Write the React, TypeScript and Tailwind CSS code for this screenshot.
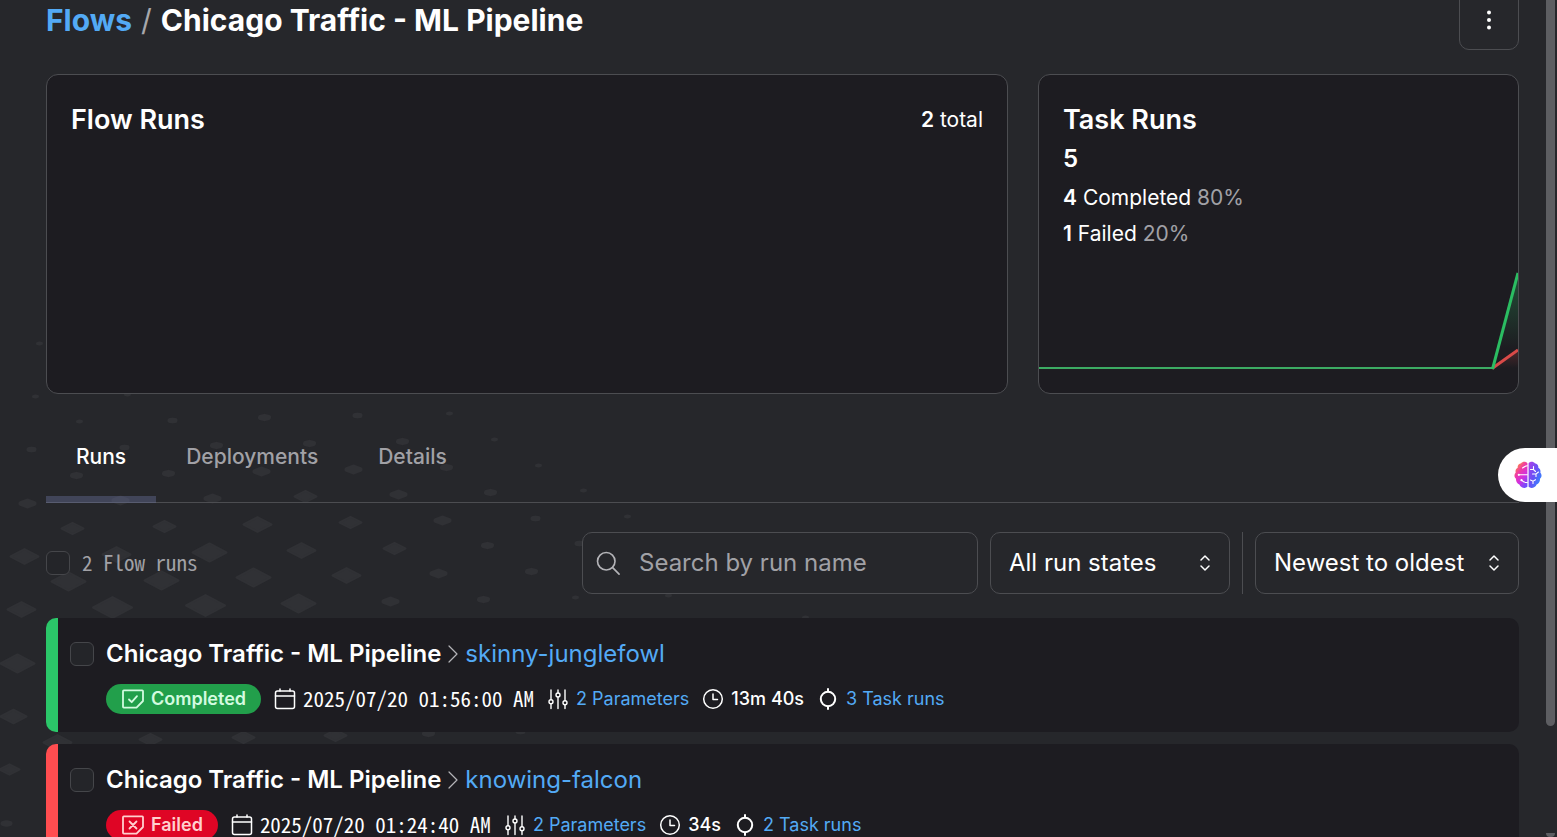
import type { ReactNode } from 'react';

/* x, y and width of each tile in the isometric backdrop */
const TILES: [number, number, number][] = [
  [39, 343, 7], [35, 396, 7], [127, 394, 7], [79, 421, 7], [172, 420, 10], [264, 417, 13], [357, 415, 10], [449, 413, 7],
  [494, 439, 7], [538, 465, 7], [583, 490, 7], [402, 441, 13], [446, 467, 13], [490, 492, 13], [216, 445, 13],
  [309, 443, 13], [124, 447, 10], [31, 449, 10], [76, 475, 13], [168, 473, 13], [261, 471, 18], [353, 469, 18],
  [398, 494, 18], [305, 496, 24], [212, 498, 18], [120, 500, 18], [27, 503, 18],
  [72, 528, 24], [164, 526, 24], [257, 524, 30], [350, 522, 24], [442, 520, 18], [535, 518, 10], [627, 516, 7],
  [24, 556, 30], [116, 554, 30], [209, 552, 36], [301, 550, 30], [394, 548, 24], [487, 545, 13], [579, 543, 10],
  [68, 581, 36], [161, 580, 36], [253, 577, 36], [346, 575, 30], [438, 573, 18], [531, 571, 13],
  [21, 609, 30], [112, 607, 41], [205, 605, 41], [298, 603, 36], [390, 601, 18], [483, 599, 13], [575, 597, 7], [668, 595, 7],
  [805, 617, 7], [17, 663, 36], [13, 716, 28], [9, 769, 22], [6, 823, 12],
  [57, 742, 30], [150, 739, 24], [243, 737, 24], [335, 735, 24], [428, 733, 13], [520, 731, 10],
];

function Backdrop() {
  return (
    <svg className="absolute left-0 top-0" width="900" height="837" aria-hidden="true">
      <g fill="#303135" stroke="#303135" strokeLinejoin="round">
        {TILES.map(([x, y, w]) => {
          const r = w > 20 ? 2 : w > 9 ? 5 : 3;
          const hx = (w - r) / 2;
          const hy = Math.max(0.4, (w * 0.56 - r) / 2);
          return (
            <polygon
              key={`${x}-${y}`}
              strokeWidth={r}
              points={`${x - hx},${y} ${x},${y - hy} ${x + hx},${y} ${x},${y + hy}`}
              transform="translate(0.5 0.5)"
            />
          );
        })}
      </g>
    </svg>
  );
}

function Icon({ children, className, stroke = 1.5 }: { children: ReactNode; className: string; stroke?: number }) {
  return (
    <svg
      viewBox="0 0 24 24"
      fill="none"
      stroke="currentColor"
      strokeWidth={stroke}
      strokeLinecap="round"
      strokeLinejoin="round"
      className={`shrink-0 ${className}`}
      aria-hidden="true"
    >
      {children}
    </svg>
  );
}

function UpDown() {
  return (
    <Icon className="pointer-events-none absolute right-[13px] top-1/2 size-6 -translate-y-1/2">
      <path d="M8 9l4-4 4 4M8 15l4 4 4-4" />
    </Icon>
  );
}

function Checkbox({ label }: { label: string }) {
  return (
    <input
      type="checkbox"
      aria-label={label}
      className="size-6 shrink-0 appearance-none rounded-md border border-[#45464a] bg-[#242529]"
    />
  );
}

function BrainIcon() {
  return (
    <svg viewBox="0 0 28 28" className="size-7" aria-hidden="true">
      <defs>
        <linearGradient id="brainLeft" x1="0.2" y1="0" x2="0.8" y2="1">
          <stop offset="0" stopColor="#ff9a2e" />
          <stop offset="0.35" stopColor="#f03aa6" />
          <stop offset="0.65" stopColor="#d030e0" />
          <stop offset="1" stopColor="#6a4dff" />
        </linearGradient>
        <linearGradient id="brainRight" x1="0" y1="0" x2="1" y2="0.8">
          <stop offset="0" stopColor="#b040e8" />
          <stop offset="0.5" stopColor="#6a50f5" />
          <stop offset="1" stopColor="#2f8bff" />
        </linearGradient>
      </defs>
      <path
        fill="url(#brainLeft)"
        d="M13.400 2.200C12 .2 8.600.2 7.200 2.200 4.800 2.400 3.300 4.600 3.700 6.800 1.600 8 1.200 10 1.700 11.400-.1 13.500.1 16.200 2 17.700 1.800 20.500 3.200 22.800 5.400 23.400 6.400 26.400 11 28.200 13.400 25.800z"
      />
      <path
        fill="url(#brainRight)"
        d="M14.600 2.200C16 .2 19.400.2 20.800 2.200 23.200 2.400 24.700 4.600 24.300 6.800 26.400 8 26.800 10 26.300 11.400 28.100 13.500 27.900 16.200 26 17.700 26.200 20.500 24.800 22.800 22.600 23.400 21.600 26.400 17 28.200 14.600 25.800z"
      />
      <g fill="none" stroke="#fff" strokeWidth="1.100" strokeLinecap="round">
        <path d="M13.400 4.800C11.500 5 10 5.800 8.500 7M13.400 13.800H5M13.400 21.500C10.500 21.800 9 21 7.500 19.200" />
        <path d="M16.500 8.500h3l2 2M19.500 8.500V5.500M18.500 13h3.500l2.500-2M22 13v2.500M16.500 19l2.500 1.200 2.500-1.500M19 20.200v2.300" />
      </g>
      <g fill="#fff">
        <circle cx="4.800" cy="13.800" r="1.100" />
        <circle cx="7.500" cy="19.200" r="1.100" />
      </g>
    </svg>
  );
}

type Run = {
  name: string;
  failed: boolean;
  date: string;
  duration: string;
  tasks: string;
};

const RUNS: Run[] = [
  { name: 'skinny-junglefowl', failed: false, date: '2025/07/20 01:56:00 AM', duration: '13m 40s', tasks: '3 Task runs' },
  { name: 'knowing-falcon', failed: true, date: '2025/07/20 01:24:40 AM', duration: '34s', tasks: '2 Task runs' },
];

const MONO = "font-['Noto_Sans_Mono_CJK_SC','Liberation_Mono',monospace] text-[21px] leading-[30px]";

function RunRow({ run }: { run: Run }) {
  return (
    <li
      className={`flex h-[114px] gap-3 rounded-[10px] border-l-[12px] bg-[#1d1c21] pl-3 pt-[21px] ${
        run.failed ? 'border-[#ff4d50]' : 'border-[#2bc769]'
      }`}
    >
      <div className="pt-[3px]">
        <Checkbox label={`Select ${run.name}`} />
      </div>
      <div>
        <div className="flex h-[30px] items-center text-2xl">
          <a href="#flow" className="font-semibold">Chicago Traffic - ML Pipeline</a>
          <Icon className="h-6 w-6 text-[#b4b4b8]" stroke={1.2}>
            <path d="M8 4l8 8-8 8" />
          </Icon>
          <a href="#run" className="text-[#53aaf5]">{run.name}</a>
        </div>
        <div className="mt-[15px] flex h-[30px] items-center gap-3 text-lg">
          <span
            className={`flex h-[30px] items-center gap-[6px] rounded-full px-[15px] font-semibold ${
              run.failed ? 'bg-[#df0525] text-[#ffd0cf]' : 'bg-[#229f4b] text-[#d3fbe0]'
            }`}
          >
            <Icon className="size-6" stroke={1.8}>
              <path d="M2 4.200a.8.8 0 0 1 .8-.8h18.400a.8.8 0 0 1 .8.8V14l-6.500 6.600H2.800a.8.8 0 0 1-.8-.8z" />
              {run.failed ? <path d="M8.500 8.500l7 7M15.500 8.500l-7 7" /> : <path d="M8 12.500l2.700 2.700 5.300-6" />}
            </Icon>
            {run.failed ? 'Failed' : 'Completed'}
          </span>
          <span className="flex items-center gap-[6px]">
            <Icon className="size-6">
              <rect x="2.500" y="4" width="19" height="17.500" rx="2" />
              <path d="M2.500 9h19M7 2v2M17 2v2" />
            </Icon>
            <span className={`pb-[3px] ${MONO}`}>{run.date}</span>
          </span>
          <span className="flex items-center gap-[6px]">
            <Icon className="size-6" stroke={1.4}>
              <path d="M5 3v9.500M5 17v4.500M12 3v3M12 10v11.500M19 3v10.500M19 18v3.500" />
              <circle cx="5" cy="14.800" r="2" />
              <circle cx="12" cy="8" r="2" />
              <circle cx="19" cy="15.800" r="2" />
            </Icon>
            <a href="#parameters" className="text-[#53aaf5]">2 Parameters</a>
          </span>
          <span className="flex items-center gap-[6px]">
            <Icon className="size-6">
              <circle cx="12" cy="12" r="9.300" />
              <path d="M12 7v5.500h4.500" />
            </Icon>
            <span className="font-medium">{run.duration}</span>
          </span>
          <span className="flex items-center gap-[6px]">
            <Icon className="size-6" stroke={2}>
              <circle cx="12" cy="12" r="7.200" />
              <path d="M12 2v2.500M12 19.500V22" />
            </Icon>
            <a href="#tasks" className="text-[#53aaf5]">{run.tasks}</a>
          </span>
        </div>
      </div>
    </li>
  );
}

const CARD = 'flex h-80 flex-col overflow-hidden rounded-xl border border-[#4c4d51] bg-[#1d1c21]';
const SELECT =
  'h-full w-full appearance-none rounded-[10px] border border-[#4c4d51] bg-[#26272b] pl-[18px] text-2xl text-white';

export default function App() {
  return (
    <div className="relative h-screen overflow-hidden bg-[#26272b] font-['Inter',sans-serif] text-white">
      <Backdrop />
      <main className="relative -mt-[10px] pl-[46px] pr-[38px]">
        <header className="flex h-[60px] items-center justify-between">
          <h1 className="flex gap-[9px] text-3xl font-bold">
            <a href="#flows" className="text-[#53aaf5]">Flows</a>
            <span className="font-normal text-[#a7a7ab]">/</span>
            <span>Chicago Traffic - ML Pipeline</span>
          </h1>
          <button
            type="button"
            aria-label="Flow menu"
            className="flex size-[60px] items-center justify-center rounded-[10px] border border-[#4c4d51]"
          >
            <svg viewBox="0 0 24 24" className="size-6" fill="currentColor" aria-hidden="true">
              <circle cx="12" cy="4.500" r="2" />
              <circle cx="12" cy="12" r="2" />
              <circle cx="12" cy="19.500" r="2" />
            </svg>
          </button>
        </header>

        <div className="mt-6 grid grid-cols-[2fr_1fr] gap-[30px]">
          <section className={CARD}>
            <div className="flex justify-between px-6 pt-6">
              <h2 className="text-[27px] font-semibold leading-[42px]">Flow Runs</h2>
              <p className="text-[21px] leading-[42px]"><span className="font-semibold">2</span> total</p>
            </div>
          </section>
          <section className={CARD}>
            <div className="px-6 pt-6">
              <h2 className="text-[27px] font-semibold leading-[42px]">Task Runs</h2>
              <p className="text-2xl font-semibold leading-9">5</p>
              <div className="mt-[3px] text-[21px] leading-9">
                <p><span className="font-semibold">4</span> Completed <span className="text-[#a1a1a6]">80%</span></p>
                <p><span className="font-semibold">1</span> Failed <span className="text-[#a1a1a6]">20%</span></p>
              </div>
            </div>
            <svg viewBox="0 0 480 122" preserveAspectRatio="none" className="mt-auto h-[122px] w-full shrink-0" aria-hidden="true">
              <defs>
                <linearGradient id="completedFill" x1="0" y1="0" x2="0" y2="1">
                  <stop offset="0" stopColor="#2bc769" stopOpacity="0.3" />
                  <stop offset="0.8" stopColor="#2bc769" stopOpacity="0" />
                </linearGradient>
                <linearGradient id="failedFill" x1="0" y1="0" x2="0" y2="1">
                  <stop offset="0" stopColor="#d94a48" stopOpacity="0.25" />
                  <stop offset="1" stopColor="#d94a48" stopOpacity="0" />
                </linearGradient>
              </defs>
              <path d="M454 97L480 2V97z" fill="url(#completedFill)" />
              <path d="M454 97L480 79V97z" fill="url(#failedFill)" />
              <path d="M454 97.500L480 79" stroke="#d94a48" strokeWidth="3" />
              <path d="M0 97H455" stroke="#3cab63" strokeWidth="2" />
              <path d="M454.500 98L480 2" stroke="#2bbd62" strokeWidth="3" />
            </svg>
          </section>
        </div>

        <nav className="mt-[30px] flex h-[79px] border-b border-[#4c4d51] text-[21px] font-medium text-[#a1a1a6]">
          <a href="#runs" className="h-[79px] border-b-[7px] border-[#6b74a066] px-[30px] pt-[18px] leading-[30px] text-white">Runs</a>
          <a href="#deployments" className="px-[30px] pt-[18px] leading-[30px]">Deployments</a>
          <a href="#details" className="px-[30px] pt-[18px] leading-[30px]">Details</a>
        </nav>

        <div className="mt-[29px] flex h-[62px] items-center gap-3">
          <Checkbox label="Select all flow runs" />
          <span className={`flex-1 pb-[3px] text-[#a1a1a6] ${MONO}`}>2 Flow runs</span>
          <div className="relative h-full w-[396px]">
            <Icon className="absolute left-3 top-[17px] size-7 text-[#b4b4b8]" stroke={1.4}>
              <circle cx="10.500" cy="10.500" r="7.500" />
              <path d="M16 16l5.500 5.500" />
            </Icon>
            <input
              type="text"
              aria-label="Search by run name"
              placeholder="Search by run name"
              className="h-full w-full rounded-[10px] border border-[#4c4d51] bg-[#26272b] pb-[2px] pl-14 text-2xl placeholder:text-[#a1a1a6]"
            />
          </div>
          <div className="relative h-full w-60">
            <select aria-label="Run states" className={SELECT}>
              <option>All run states</option>
            </select>
            <UpDown />
          </div>
          <div className="h-full w-px bg-[#4c4d51]" />
          <div className="relative h-full w-[264px]">
            <select aria-label="Sort order" className={SELECT}>
              <option>Newest to oldest</option>
            </select>
            <UpDown />
          </div>
        </div>

        <ul className="mt-6 flex flex-col gap-3">
          {RUNS.map((run) => (
            <RunRow key={run.name} run={run} />
          ))}
        </ul>
      </main>

      <div className="absolute right-[2px] top-0 h-[726px] w-[9px] rounded-b-full bg-[#5d5e62]" />
      <div className="absolute bottom-0 right-[2px] h-1 w-[9px] rounded-b-full bg-[#5d5e62]" />
      <button
        type="button"
        aria-label="Open assistant"
        className="absolute right-0 top-[448px] flex h-[54px] w-[59px] items-center rounded-l-full bg-white pl-4"
      >
        <BrainIcon />
      </button>
    </div>
  );
}
